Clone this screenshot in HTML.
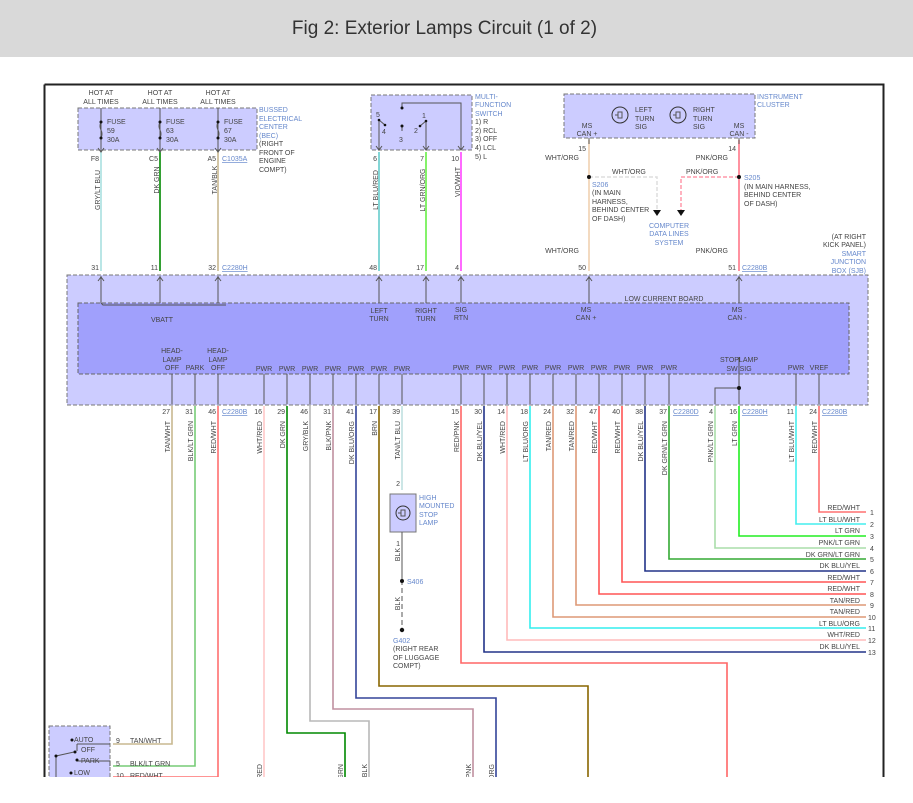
<!DOCTYPE html>
<html><head><meta charset="utf-8"><style>
html,body{margin:0;padding:0;background:#fff;width:913px;height:803px;overflow:hidden}
.hdr{position:absolute;left:0;top:0;width:889px;padding-right:24px;height:57px;background:#d9d9d9;font:19px "Liberation Sans",sans-serif;color:#333;text-align:center;line-height:57px}
svg{position:absolute;left:0;top:0}
text{font-family:"Liberation Sans",sans-serif;font-size:7px;fill:#444}
.b{fill:#6688cc}
.u{fill:#6688cc;text-decoration:underline}
.w{fill:none;stroke-width:1.6}
.k{stroke:#555;stroke-width:1;fill:none}
</style></head><body>
<div class="hdr">Fig 2: Exterior Lamps Circuit (1 of 2)</div>
<svg width="913" height="803" viewBox="0 0 913 803">
<defs><clipPath id="c"><rect x="0" y="60" width="913" height="717"/></clipPath></defs>
<g clip-path="url(#c)">
<path d="M44.5 84.5H883.5V800M44.5 84.5V800" stroke="#222" stroke-width="2" fill="none"/>
<rect x="78" y="108" width="179" height="42" fill="#ccccff" stroke="#777" stroke-dasharray="4,2"/>
<rect x="371" y="95" width="101" height="55" fill="#ccccff" stroke="#777" stroke-dasharray="4,2"/>
<rect x="564" y="94" width="191" height="44" fill="#ccccff" stroke="#777" stroke-dasharray="4,2"/>
<rect x="67" y="275" width="801" height="130" fill="#ccccff" stroke="#777" stroke-dasharray="4,2"/>
<rect x="78" y="303" width="771" height="71" fill="#a0a0fc" stroke="#666" stroke-dasharray="4,2"/>
<rect x="49" y="726" width="61" height="60" fill="#ccccff" stroke="#777" stroke-dasharray="4,2"/>
<rect x="390" y="494" width="26" height="38" fill="#ccccff" stroke="#777"/>
<path class="w" stroke="#a8e0e0" d="M101 152V271"/>
<path class="w" stroke="#008800" d="M160 152V271"/>
<path class="w" stroke="#c8b890" d="M218 152V271"/>
<path class="w" stroke="#66cccc" d="M379 152V271"/>
<path class="w" stroke="#66ee44" d="M426 152V271"/>
<path class="w" stroke="#ff44ff" d="M461 152V271"/>
<path class="w" stroke="#f0d0b0" d="M589 140V271"/>
<path class="w" stroke="#ff7788" d="M739 140V271"/>
<path d="M589 177H657V210" fill="none" stroke="#ddd" stroke-width="1.5" stroke-dasharray="4,2"/>
<path d="M739 177H681V210" fill="none" stroke="#ff99aa" stroke-width="1.5" stroke-dasharray="4,2"/>
<path d="M653 210h8l-4 6zM677 210h8l-4 6z" fill="#111"/>
<circle cx="589" cy="177" r="2" fill="#111"/><circle cx="739" cy="177" r="2" fill="#111"/>
<g class="k">
<path d="M101 108V152M98 148l3 4 3-4M160 108V152M157 148l3 4 3-4M218 108V152M215 148l3 4 3-4"/>
<path d="M101 122q-2 4 0 8q2 4 0 8M160 122q-2 4 0 8q2 4 0 8M218 122q-2 4 0 8q2 4 0 8"/>
<path d="M379 150V120M376 146l3 4 3-4M426 150V121M423 146l3 4 3-4M461 150V103H402V108M458 146l3 4 3-4"/>
<path d="M379 120l6 5M426 121l-6 5M402 126V131"/>
<path d="M589 138v6M739 138v6"/>
<path d="M615 115h3v-3h4v6h-4v-3M673 115h3v-3h4v6h-4v-3"/>
<path d="M398 513h3v-3h4v6h-4v-3"/>
</g>
<circle cx="101" cy="122" r="1.5" fill="#111"/><circle cx="160" cy="122" r="1.5" fill="#111"/><circle cx="218" cy="122" r="1.5" fill="#111"/>
<circle cx="101" cy="138" r="1.5" fill="#111"/><circle cx="160" cy="138" r="1.5" fill="#111"/><circle cx="218" cy="138" r="1.5" fill="#111"/>
<circle cx="402" cy="108" r="1.5" fill="#111"/><circle cx="402" cy="126" r="1.5" fill="#111"/>
<circle cx="385" cy="125" r="1.3" fill="#111"/><circle cx="420" cy="126" r="1.3" fill="#111"/><circle cx="379" cy="120" r="1.3" fill="#111"/><circle cx="426" cy="121" r="1.3" fill="#111"/>
<circle cx="620" cy="115" r="8" fill="none" stroke="#333"/><circle cx="678" cy="115" r="8" fill="none" stroke="#333"/>
<g class="k">
<path d="M101 276V298M160 276V298M218 276V298M379 276V303M426 276V303M461 276V303M589 276V303M739 276V303M98 281l3-4 3 4M157 281l3-4 3 4M215 281l3-4 3 4M376 281l3-4 3 4M423 281l3-4 3 4M458 281l3-4 3 4M586 281l3-4 3 4M736 281l3-4 3 4"/>
<path d="M101 303l2 2H226"/>
<path d="M101 298V303M160 298V303M218 298V303"/>
</g>
<g class="w">
<path stroke="#c8b890" d="M172 406V744H113"/>
<path stroke="#77cc77" d="M195 406V766H113"/>
<path stroke="#ff7070" d="M218 406V800"/>
<path stroke="#ffc8c8" d="M264 406V800"/>
<path stroke="#008800" d="M287 406V733H345V800"/>
<path stroke="#b8b8b8" d="M310 406V721H369V800"/>
<path stroke="#c090a0" d="M333 406V709H473V800"/>
<path stroke="#334499" d="M356 406V698H496V800"/>
<path stroke="#886600" d="M379 406V686H588V800"/>
<path stroke="#c0e0e0" d="M402 406V490"/>
<path stroke="#555" stroke-width="1" d="M402 532V580"/>
<path stroke="#555" stroke-width="1" stroke-dasharray="5,3" d="M402 580V630"/>
<path stroke="#ff6666" d="M461 406V663H727V800"/>
<path stroke="#223388" d="M484 406V652H866"/>
<path stroke="#ffbbbb" d="M507 406V640H866"/>
<path stroke="#33eeee" d="M530 406V628H866"/>
<path stroke="#dd9977" d="M553 406V617H866"/>
<path stroke="#dd9977" d="M576 406V605H866"/>
<path stroke="#ff5555" d="M599 406V594H866"/>
<path stroke="#ff5555" d="M622 406V582H866"/>
<path stroke="#223388" d="M645 406V571H866"/>
<path stroke="#33aa33" d="M669 406V559H866"/>
<path stroke="#aaddaa" d="M715 406V548H866"/>
<path stroke="#22ee22" d="M739 406V536H866"/>
<path stroke="#44eeee" d="M796 406V524H866"/>
<path stroke="#ff7070" d="M819 406V512H866"/>
</g>
<g class="k">
<path d="M172 374V404M195 374V404M218 374V404M264 374V404M287 374V404M310 374V404M333 374V404M356 374V404M379 374V404M402 374V404M461 374V404M484 374V404M507 374V404M530 374V404M553 374V404M576 374V404M599 374V404M622 374V404M645 374V404M669 374V404M739 374V404M796 374V404M819 374V404M739 357V388H715V404"/>
</g>
<circle cx="739" cy="388" r="2" fill="#111"/>
<circle cx="402" cy="581" r="2" fill="#111"/><circle cx="402" cy="630" r="2.2" fill="#111"/>
<circle cx="403" cy="513" r="7" fill="none" stroke="#333"/>
<g class="k"><path d="M56 756l18-4M56 756V790M77 744H110M77 744V751M77 761H110V766"/></g>
<circle cx="72" cy="740" r="1.5" fill="#111"/><circle cx="75" cy="752" r="1.5" fill="#111"/><circle cx="77" cy="760" r="1.5" fill="#111"/><circle cx="71" cy="773" r="1.5" fill="#111"/><circle cx="56" cy="756" r="1.5" fill="#111"/>
<path class="w" stroke="#ff7070" d="M113 777H218"/>
<g text-anchor="middle">
<text x="101" y="95">HOT AT</text><text x="101" y="104">ALL TIMES</text>
<text x="160" y="95">HOT AT</text><text x="160" y="104">ALL TIMES</text>
<text x="218" y="95">HOT AT</text><text x="218" y="104">ALL TIMES</text>
</g>
<text x="107" y="124">FUSE</text><text x="107" y="133">59</text><text x="107" y="142">30A</text>
<text x="166" y="124">FUSE</text><text x="166" y="133">63</text><text x="166" y="142">30A</text>
<text x="224" y="124">FUSE</text><text x="224" y="133">67</text><text x="224" y="142">30A</text>
<text class="b" x="259" y="112">BUSSED</text><text class="b" x="259" y="121">ELECTRICAL</text><text class="b" x="259" y="129">CENTER</text><text class="b" x="259" y="138">(BEC)</text>
<text x="259" y="146">(RIGHT</text><text x="259" y="155">FRONT OF</text><text x="259" y="163">ENGINE</text><text x="259" y="172">COMPT)</text>
<g text-anchor="end"><text x="99" y="161">F8</text><text x="158" y="161">C5</text><text x="216" y="161">A5</text>
<text x="99" y="270">31</text><text x="158" y="270">11</text><text x="216" y="270">32</text>
<text x="377" y="161">6</text><text x="424" y="161">7</text><text x="459" y="161">10</text>
<text x="377" y="270">48</text><text x="424" y="270">17</text><text x="459" y="270">4</text>
<text x="586" y="151">15</text><text x="736" y="151">14</text><text x="586" y="270">50</text><text x="736" y="270">51</text>
<text x="579" y="160">WHT/ORG</text><text x="728" y="160">PNK/ORG</text>
<text x="579" y="253">WHT/ORG</text><text x="728" y="253">PNK/ORG</text>
<text x="866" y="239">(AT RIGHT</text><text x="866" y="247">KICK PANEL)</text>
<text class="b" x="866" y="256">SMART</text><text class="b" x="866" y="264">JUNCTION</text><text class="b" x="866" y="273">BOX (SJB)</text>
</g>
<text class="u" x="222" y="161">C1035A</text><text class="u" x="222" y="270">C2280H</text><text class="u" x="742" y="270">C2280B</text>
<g transform="rotate(-90)" text-anchor="middle">
<text x="-190" y="100">GRY/LT BLU</text><text x="-180" y="159">DK GRN</text><text x="-180" y="217">TAN/BLK</text>
<text x="-190" y="378">LT BLU/RED</text><text x="-190" y="425">LT GRN/ORG</text><text x="-182" y="460">VIO/WHT</text>
</g>
<text x="376" y="117">5</text><text x="382" y="134">4</text><text x="399" y="142">3</text><text x="414" y="133">2</text><text x="422" y="118">1</text>
<text class="b" x="475" y="99">MULTI-</text><text class="b" x="475" y="107">FUNCTION</text><text class="b" x="475" y="116">SWITCH</text>
<text x="475" y="124">1) R</text><text x="475" y="133">2) RCL</text><text x="475" y="141">3) OFF</text><text x="475" y="150">4) LCL</text><text x="475" y="159">5) L</text>
<text class="b" x="757" y="99">INSTRUMENT</text><text class="b" x="757" y="107">CLUSTER</text>
<text x="635" y="112">LEFT</text><text x="635" y="121">TURN</text><text x="635" y="129">SIG</text>
<text x="693" y="112">RIGHT</text><text x="693" y="121">TURN</text><text x="693" y="129">SIG</text>
<g text-anchor="middle"><text x="587" y="128">MS</text><text x="587" y="136">CAN +</text><text x="739" y="128">MS</text><text x="739" y="136">CAN -</text>
<text class="b" x="669" y="228">COMPUTER</text><text class="b" x="669" y="236">DATA LINES</text><text class="b" x="669" y="245">SYSTEM</text></g>
<text x="612" y="174">WHT/ORG</text><text x="686" y="174">PNK/ORG</text>
<text class="b" x="592" y="187">S206</text><text x="592" y="195">(IN MAIN</text><text x="592" y="204">HARNESS,</text><text x="592" y="212">BEHIND CENTER</text><text x="592" y="221">OF DASH)</text>
<text class="b" x="744" y="180">S205</text><text x="744" y="189">(IN MAIN HARNESS,</text><text x="744" y="197">BEHIND CENTER</text><text x="744" y="206">OF DASH)</text>
<g text-anchor="middle">
<text x="162" y="322">VBATT</text><text x="664" y="301">LOW CURRENT BOARD</text>
<text x="379" y="313">LEFT</text><text x="379" y="321">TURN</text><text x="426" y="313">RIGHT</text><text x="426" y="321">TURN</text>
<text x="461" y="312">SIG</text><text x="461" y="320">RTN</text>
<text x="586" y="312">MS</text><text x="586" y="320">CAN +</text><text x="737" y="312">MS</text><text x="737" y="320">CAN -</text>
<text x="172" y="353">HEAD-</text><text x="172" y="362">LAMP</text><text x="172" y="370">OFF</text>
<text x="195" y="370">PARK</text>
<text x="218" y="353">HEAD-</text><text x="218" y="362">LAMP</text><text x="218" y="370">OFF</text>
<text x="264" y="371">PWR</text><text x="287" y="371">PWR</text><text x="310" y="371">PWR</text><text x="333" y="371">PWR</text><text x="356" y="371">PWR</text><text x="379" y="371">PWR</text><text x="402" y="371">PWR</text>
<text x="461" y="370">PWR</text><text x="484" y="370">PWR</text><text x="507" y="370">PWR</text><text x="530" y="370">PWR</text><text x="553" y="370">PWR</text><text x="576" y="370">PWR</text><text x="599" y="370">PWR</text><text x="622" y="370">PWR</text><text x="645" y="370">PWR</text><text x="669" y="370">PWR</text>
<text x="739" y="362">STOPLAMP</text><text x="739" y="371">SW SIG</text>
<text x="796" y="370">PWR</text><text x="819" y="370">VREF</text>
</g>
<g text-anchor="end">
<text x="170" y="414">27</text><text x="193" y="414">31</text><text x="216" y="414">46</text>
<text x="262" y="414">16</text><text x="285" y="414">29</text><text x="308" y="414">46</text><text x="331" y="414">31</text><text x="354" y="414">41</text><text x="377" y="414">17</text><text x="400" y="414">39</text>
<text x="459" y="414">15</text><text x="482" y="414">30</text><text x="505" y="414">14</text><text x="528" y="414">18</text><text x="551" y="414">24</text><text x="574" y="414">32</text><text x="597" y="414">47</text><text x="620" y="414">40</text><text x="643" y="414">38</text><text x="667" y="414">37</text>
<text x="713" y="414">4</text><text x="737" y="414">16</text><text x="794" y="414">11</text><text x="817" y="414">24</text>
<text x="400" y="486">2</text><text x="400" y="546">1</text>
</g>
<text class="u" x="222" y="414">C2280B</text><text class="u" x="673" y="414">C2280D</text><text class="u" x="742" y="414">C2280H</text><text class="u" x="822" y="414">C2280B</text>
<g transform="rotate(-90)" text-anchor="end">
<text x="-421" y="170">TAN/WHT</text><text x="-421" y="193">BLK/LT GRN</text><text x="-421" y="216">RED/WHT</text>
<text x="-421" y="262">WHT/RED</text><text x="-421" y="285">DK GRN</text><text x="-421" y="308">GRY/BLK</text><text x="-421" y="331">BLK/PNK</text><text x="-421" y="354">DK BLU/ORG</text><text x="-421" y="377">BRN</text><text x="-421" y="400">TAN/LT BLU</text>
<text x="-421" y="459">RED/PNK</text><text x="-421" y="482">DK BLU/YEL</text><text x="-421" y="505">WHT/RED</text><text x="-421" y="528">LT BLU/ORG</text><text x="-421" y="551">TAN/RED</text><text x="-421" y="574">TAN/RED</text><text x="-421" y="597">RED/WHT</text><text x="-421" y="620">RED/WHT</text><text x="-421" y="643">DK BLU/YEL</text><text x="-421" y="667">DK GRN/LT GRN</text>
<text x="-421" y="713">PNK/LT GRN</text><text x="-421" y="737">LT GRN</text><text x="-421" y="794">LT BLU/WHT</text><text x="-421" y="817">RED/WHT</text>
<text x="-548" y="400">BLK</text><text x="-597" y="400">BLK</text>
<text x="-764" y="262">WHT/RED</text><text x="-764" y="343">DK GRN</text><text x="-764" y="367">GRY/BLK</text><text x="-764" y="471">BLK/PNK</text><text x="-764" y="494">DK BLU/ORG</text>
</g>
<text class="b" x="419" y="500">HIGH</text><text class="b" x="419" y="508">MOUNTED</text><text class="b" x="419" y="517">STOP</text><text class="b" x="419" y="525">LAMP</text>
<text class="b" x="407" y="584">S406</text>
<text class="b" x="393" y="643">G402</text><text x="393" y="651">(RIGHT REAR</text><text x="393" y="660">OF LUGGAGE</text><text x="393" y="668">COMPT)</text>
<g text-anchor="end">
<text x="860" y="510">RED/WHT</text><text x="860" y="522">LT BLU/WHT</text><text x="860" y="533">LT GRN</text><text x="860" y="545">PNK/LT GRN</text><text x="860" y="557">DK GRN/LT GRN</text><text x="860" y="568">DK BLU/YEL</text><text x="860" y="580">RED/WHT</text><text x="860" y="591">RED/WHT</text><text x="860" y="603">TAN/RED</text><text x="860" y="614">TAN/RED</text><text x="860" y="626">LT BLU/ORG</text><text x="860" y="637">WHT/RED</text><text x="860" y="649">DK BLU/YEL</text>
</g>
<text x="870" y="515">1</text><text x="870" y="527">2</text><text x="870" y="539">3</text><text x="870" y="551">4</text><text x="870" y="562">5</text><text x="870" y="574">6</text><text x="870" y="585">7</text><text x="870" y="597">8</text><text x="870" y="608">9</text><text x="868" y="620">10</text><text x="868" y="631">11</text><text x="868" y="643">12</text><text x="868" y="655">13</text>
<text x="74" y="742">AUTO</text><text x="81" y="752">OFF</text><text x="81" y="763">PARK</text><text x="74" y="775">LOW</text>
<text x="116" y="743">9</text><text x="116" y="766">5</text><text x="116" y="778">10</text>
<text x="130" y="743">TAN/WHT</text><text x="130" y="766">BLK/LT GRN</text><text x="130" y="778">RED/WHT</text>
</g>
</svg>
</body></html>
